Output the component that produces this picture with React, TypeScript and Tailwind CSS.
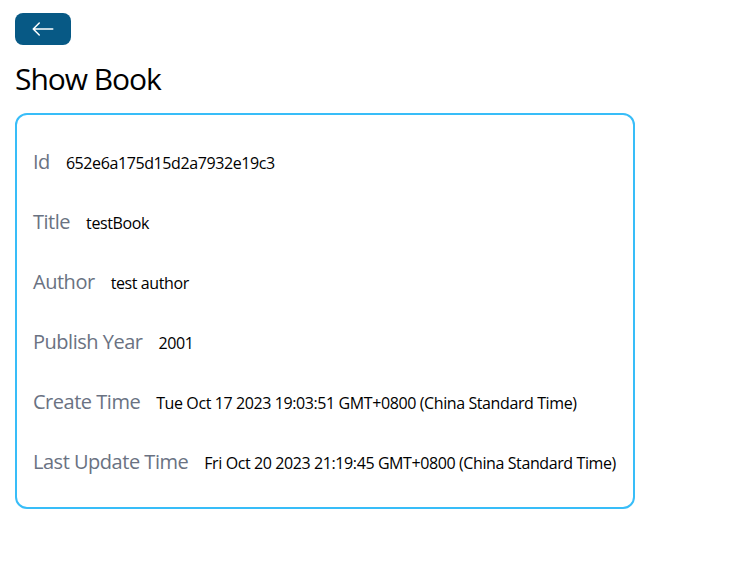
import { BsArrowLeft } from 'react-icons/bs'

interface Field {
  label: string
  value: string
}

const book: Field[] = [
  { label: 'Id', value: '652e6a175d15d2a7932e19c3' },
  { label: 'Title', value: 'testBook' },
  { label: 'Author', value: 'test author' },
  { label: 'Publish Year', value: '2001' },
  { label: 'Create Time', value: 'Tue Oct 17 2023 19:03:51 GMT+0800 (China Standard Time)' },
  { label: 'Last Update Time', value: 'Fri Oct 20 2023 21:19:45 GMT+0800 (China Standard Time)' },
]

const BackButton = () => (
  <div className="flex">
    <button className="bg-[#075985] text-white px-4 py-1 rounded-lg w-fit">
      <BsArrowLeft className="text-2xl" />
    </button>
  </div>
)

export default function App() {
  return (
    <div
      className="pl-[15px] pr-4 pt-[13px] min-h-screen bg-white text-black tracking-[-0.03em]"
      style={{ fontFamily: '"Segoe UI", "Open Sans", sans-serif' }}
    >
      <BackButton />
      <h1 className="text-3xl my-4 tracking-[-0.035em]">Show Book</h1>
      <div className="flex flex-col border-2 border-[#38bdf8] rounded-xl w-[620px] p-4">
        {book.map((field) => (
          <div key={field.label} className="mt-[17px] mb-[15px] flex items-baseline whitespace-nowrap">
            <span className="text-xl mr-4 text-gray-500">{field.label}</span>
            <span className="tracking-[-0.025em]">{field.value}</span>
          </div>
        ))}
      </div>
    </div>
  )
}
